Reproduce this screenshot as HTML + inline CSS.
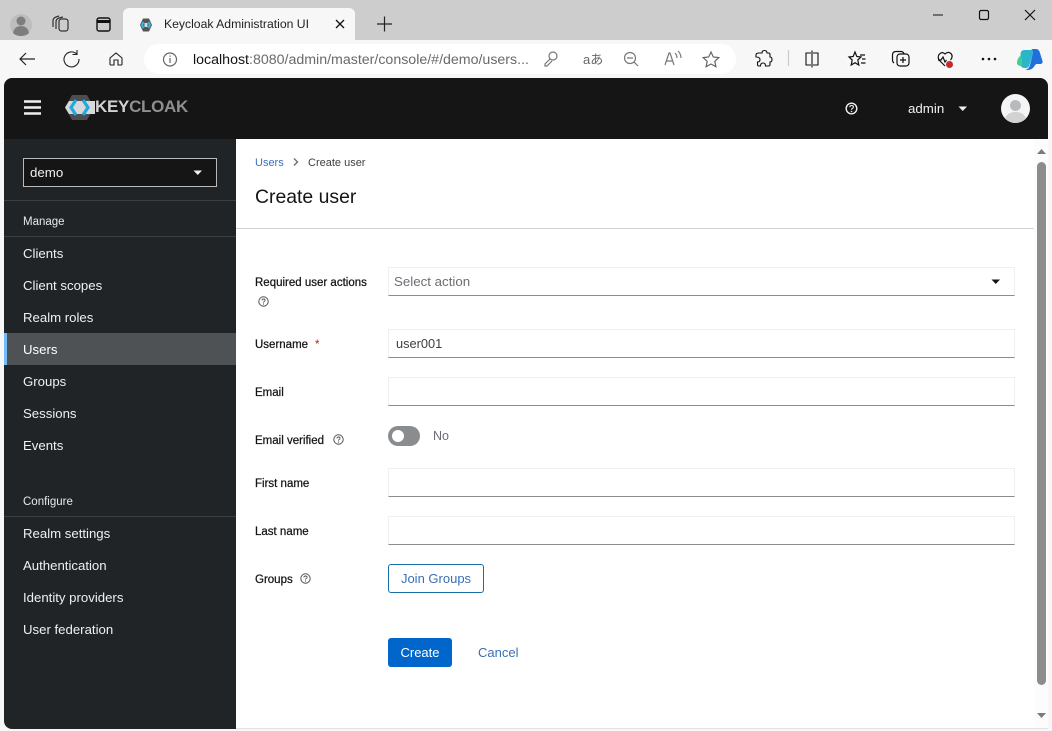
<!DOCTYPE html>
<html><head><meta charset="utf-8"><title>Keycloak Administration UI</title>
<style>
html,body{margin:0;padding:0;width:1052px;height:731px;overflow:hidden;background:#f7f7f7;font-family:"Liberation Sans",sans-serif}
.a{position:absolute;white-space:nowrap}
svg{position:absolute;overflow:visible}
.nav{position:absolute;left:23px;font-size:13.2px;color:#f0f0f0;white-space:nowrap;line-height:16px;margin-top:1px}
.lab{position:absolute;left:255px;font-size:11.5px;font-weight:400;color:#151515;white-space:nowrap;line-height:14px;-webkit-text-stroke:.25px #151515;margin-top:1px}
.inp{position:absolute;left:388px;width:627px;height:28px;box-sizing:border-box;background:#fff;border:1px solid #f0f0f0;border-bottom:1px solid #8a8d90;font-size:13.3px;color:#4f5255;line-height:26px;padding-left:5px}
.sep{position:absolute;left:4px;width:232px;height:1px;background:#3c3f42}
</style></head><body>
<div class="a" style="left:0;top:0;width:1052px;height:40px;background:#cdcdcd"></div>
<div class="a" style="left:0;top:40px;width:1052px;height:38px;background:#f7f7f7"></div>
<div class="a" style="left:123px;top:8px;width:232px;height:32px;background:#f7f7f7;border-radius:6px 6px 0 0"></div>
<div class="a" style="left:164px;top:16px;font-size:12.2px;color:#222;line-height:16px">Keycloak Administration UI</div>
<div class="a" style="left:144px;top:44px;width:592px;height:30px;background:#fff;border-radius:15px"></div>
<div class="a" style="left:193px;top:52px;font-size:14.2px;line-height:17px;color:#6a6a6a"><span style="color:#111">localhost</span>:8080/admin/master/console/#/demo/users...</div>

<svg style="left:0;top:0" width="1052" height="78" viewBox="0 0 1052 78" fill="none" stroke="#222" stroke-width="1.2">
 <circle cx="21" cy="25" r="11" fill="#bdbdbd" stroke="none"/>
 <circle cx="21" cy="21" r="4.5" fill="#7d7d7d" stroke="none"/>
 <path d="M13 33c1-5 4-7 8-7s7 2 8 7c-2 2-5 3-8 3s-6-1-8-3z" fill="#7d7d7d" stroke="none"/>
 <path d="M53 27v-6q0-3 3-4l3-1M56 29v-7q0-3 3-4l4-1" stroke="#333"/><rect x="59" y="19" width="9" height="12" rx="2.5" stroke="#333"/>
 <rect x="97" y="18" width="13" height="13" rx="2" stroke="#111" stroke-width="1.4"/><path d="M97 21.500h13" stroke="#111" stroke-width="3"/>
 <path d="M336 20l8 8M344 20l-8 8" stroke="#111" stroke-width="1.3"/>
 <path d="M377 24h15M384.500 16.500v15" stroke="#222" stroke-width="1.2"/>
 <path d="M35 59H20M26 53l-6 6 6 6" stroke-width="1.2"/>
 <path d="M76.500 53.800A7.500 7.500 0 1 0 79 59M77 50v4.500h-4.500" stroke-width="1.1"/>
 <path d="M110 58l6-5 6 5v6q0 1-1 1h-3v-5h-4v5h-3q-1 0-1-1z" stroke-width="1.1"/>
 <circle cx="170" cy="59.500" r="6.500" stroke="#666"/><path d="M170 58v5M170 55.500v1.200" stroke="#666"/>
 <circle cx="553" cy="56" r="4" stroke="#777"/><path d="M550 59l-5 5v2h2l5-5" stroke="#777"/>
 <text x="583" y="64" font-family="Liberation Sans,Noto Sans CJK JP,sans-serif" font-size="13" fill="#666" stroke="none">aあ</text>
 <circle cx="630" cy="58" r="5.500" stroke="#777"/><path d="M627 58h6M634 62l4 4" stroke="#777"/>
 <path d="M665 65l4-12h1l4 12M666.500 61h6M675 53q2 2 2 5M678 51q3 3 3 7" stroke="#777"/>
 <path d="M711 52l2.300 5 5.500.6-4 3.700 1.100 5.400-4.900-2.700-4.900 2.700 1.100-5.400-4-3.700 5.500-.6z" stroke="#666"/>
 <path d="M759 53h3q0-2.500 2.500-2.500t2.500 2.500h1.500q1.500 0 1.500 1.500v2.500q2 0 2 2.500t-2 2.500v2.500q0 1.500-1.500 1.500h-3q0-3-2.500-3t-2.500 3h-1.500q-1.500 0-1.500-1.500V62q2.500 0 2.500-2.500T756 57v-2q0-2 3-2z" stroke="#111" stroke-width="1.100"/>
 <path d="M788.500 50v16" stroke="#ccc"/>
 <path d="M812 50.500v17M811 53h-5v12h5M813 53h5v12h-5" stroke="#111" stroke-width="1.100"/>
 <path d="M855 52l1.800 4.500 4.200.5-3.200 3 1 5-3.800-2.300-3.800 2.300 1-5-3.200-3 4.200-.5zM860 55h5M862 59h3.500M861 63h4.500" stroke="#111"/>
 <path d="M894 63q-1.500-1-1.500-3v-5q0-3.500 3.500-3.500h5q2 0 3 2" stroke="#111"/><rect x="897" y="54" width="12" height="12" rx="3" stroke="#111"/><path d="M903 57v6M900 60h6" stroke="#111"/>
 <path d="M945 66l-5-5q-3-3-1-6.500 3-3.500 6-.5 3-3 6-.5 2.500 3-.500 6.500" stroke="#111"/><path d="M938 60h3l2-3 2 5 1.500-2" stroke="#111"/><circle cx="949.500" cy="64.500" r="3.500" fill="#c42b2b" stroke="none"/>
 <circle cx="983" cy="59" r="1.300" fill="#111" stroke="none"/><circle cx="989" cy="59" r="1.300" fill="#111" stroke="none"/><circle cx="995" cy="59" r="1.300" fill="#111" stroke="none"/>
 <path d="M1024 50h8q2 0 1.500 2l-4 13q-1 3-4 3h-2q-3-1-3-4v-9q0-5 3.500-5z" fill="#2bb5c9" stroke="none"/>
 <path d="M1031 49h5q3 0 4 4l2.500 8q.5 3-2.500 3h-4l-3 4q-2 2-6 2h-2q4-1 5-5l3-12q.5-3-2-4z" fill="#1f6fdc" stroke="none"/>
 <path d="M1020 56q-3 3-3 7 0 2 3 3l2-1v-7z" fill="#3fcf8e" stroke="none"/>
 <path d="M933 15h10" stroke="#111" stroke-width="1"/><rect x="979.500" y="10.500" width="9" height="9" rx="1.500" stroke="#111"/><path d="M1025 10l10 10M1035 10l-10 10" stroke="#111"/>
</svg>
<svg style="left:140px;top:18px" width="12" height="14" viewBox="0 0 12 14"><path d="M3 0.500h6l3 6.500-3 6.500H3L0 7z" fill="#555"/><path d="M3.500 4L2 7l1.500 3M8.500 4L10 7l-1.500 3" stroke="#3ab4e0" stroke-width="2" fill="none"/><rect x="4.500" y="5" width="3" height="4" fill="#bfe6f5"/></svg>

<!-- App -->
<div class="a" style="left:4px;top:78px;width:1044px;height:651px;background:#fff;border-radius:8px;overflow:hidden">
 <div class="a" style="left:0;top:0;width:1044px;height:61px;background:#151515"></div>
 <div class="a" style="left:0;top:61px;width:232px;height:590px;background:#212427"></div>
 <div class="a" style="left:0;top:255px;width:232px;height:32px;background:#4f5255"></div>
 <div class="a" style="left:0;top:255px;width:3px;height:32px;background:#73bcf7"></div>
</div>
<div class="a" style="left:236px;top:728px;width:812px;height:1px;background:#e4e4e4"></div>

<!-- Header -->
<svg style="left:24px;top:100px" width="18" height="15"><path d="M0 1.500h17M0 7.500h17M0 13.500h17" stroke="#f0f0f0" stroke-width="2.600"/></svg>
<svg style="left:64px;top:94px" width="34" height="27" viewBox="0 0 34 27">
 <path d="M8 1h15l7 12.500-7 12.500H8L1 13.500z" fill="#4d4d4d"/>
 <path d="M1 13.500L5 7h26v13H5z" fill="#d8d8d8"/>
 <path d="M12 6L7 13.500l5 7.500M19 6l5 7.500-5 7.500" stroke="#1fa9e0" stroke-width="3.200" fill="none"/>
</svg>
<div class="a" style="left:95px;top:97px;font-size:17px;font-weight:700;line-height:20px;letter-spacing:-.3px;color:#8f8f8f"><span style="color:#d2d2d2">KEY</span>CLOAK</div>
<svg style="left:845px;top:102px" width="13" height="13" viewBox="0 0 13 13"><circle cx="6.500" cy="6.500" r="5.300" stroke="#f0f0f0" stroke-width="1.400" fill="none"/><path d="M4.700 5.200q.2-1.700 1.900-1.700 1.800 0 1.800 1.500 0 1-1.100 1.500-.8.400-.8 1.300" stroke="#f0f0f0" stroke-width="1.100" fill="none"/><circle cx="6.500" cy="9.500" r=".8" fill="#f0f0f0"/></svg>
<div class="a" style="left:908px;top:100px;font-size:13.300px;line-height:17px;color:#f0f0f0">admin</div>
<svg style="left:958px;top:106px" width="10" height="6"><path d="M0.500 0.500h8.500L4.750 5z" fill="#f0f0f0"/></svg>
<svg style="left:1001px;top:94px" width="29" height="29" viewBox="0 0 29 29"><defs><clipPath id="av"><circle cx="14.500" cy="14.500" r="14.500"/></clipPath></defs><circle cx="14.500" cy="14.500" r="14.500" fill="#f5f5f5"/><g clip-path="url(#av)"><circle cx="14.500" cy="11.500" r="5.500" fill="#b8bbbe"/><path d="M3 29q1-11 11.500-11T26 29z" fill="#d2d2d2"/></g></svg>

<!-- Sidebar -->
<div class="a" style="left:23px;top:158px;width:194px;height:29px;box-sizing:border-box;border:1px solid #b8bbbe;background:#151515;color:#f0f0f0;font-size:13.300px;line-height:27px;padding-left:6px">demo</div>
<svg style="left:193px;top:170px" width="10" height="6"><path d="M0.500 0.500h8.500L4.750 5z" fill="#f0f0f0"/></svg>
<div class="sep" style="top:200px"></div>
<div class="a" style="left:23px;top:215px;font-size:11.500px;color:#e8e8e8;line-height:14px">Manage</div>
<div class="sep" style="top:236px"></div>
<div class="nav" style="top:245px">Clients</div>
<div class="nav" style="top:277px">Client scopes</div>
<div class="nav" style="top:309px">Realm roles</div>
<div class="nav" style="top:341px;color:#fff">Users</div>
<div class="nav" style="top:373px">Groups</div>
<div class="nav" style="top:405px">Sessions</div>
<div class="nav" style="top:437px">Events</div>
<div class="a" style="left:23px;top:495px;font-size:11.500px;color:#e8e8e8;line-height:14px">Configure</div>
<div class="sep" style="top:516px"></div>
<div class="nav" style="top:525px">Realm settings</div>
<div class="nav" style="top:557px">Authentication</div>
<div class="nav" style="top:589px">Identity providers</div>
<div class="nav" style="top:621px">User federation</div>

<!-- Main -->
<div class="a" style="left:255px;top:156px;font-size:11px;line-height:14px;color:#3b6fb6">Users</div>
<svg style="left:293px;top:158px" width="6" height="8"><path d="M1 .5L4.500 4 1 7.500" stroke="#6a6e73" stroke-width="1.400" fill="none"/></svg>
<div class="a" style="left:308px;top:156px;font-size:11px;line-height:14px;color:#3c3f42">Create user</div>
<div class="a" style="left:255px;top:186px;font-size:19.400px;line-height:23px;color:#151515">Create user</div>
<div class="a" style="left:236px;top:228px;width:798px;height:1px;background:#d2d2d2"></div>

<div class="lab" style="top:275px">Required user actions</div>
<svg style="left:258px;top:296px" width="11" height="11" viewBox="0 0 11 11"><use href="#q"/></svg>
<div class="inp" style="top:267px;height:29px;color:#6a6e73;line-height:27px">Select action</div>
<svg style="left:991px;top:279px" width="10" height="6"><path d="M0.500 0.500h8.500L4.750 5z" fill="#151515"/></svg>

<div class="lab" style="top:337px">Username</div>
<div class="a" style="left:315px;top:338px;font-size:11.500px;line-height:14px;color:#c9190b">*</div>
<div class="inp" style="top:329px;height:29px;color:#3c3f42;font-size:12.800px;padding-left:7px;line-height:27px">user001</div>

<div class="lab" style="top:385px">Email</div>
<div class="inp" style="top:377px;height:29px"></div>

<div class="lab" style="top:433px">Email verified</div>
<svg style="left:333px;top:434px" width="11" height="11" viewBox="0 0 11 11"><use href="#q"/></svg>
<div class="a" style="left:388px;top:426px;width:32px;height:20px;border-radius:10px;background:#8a8d90"></div>
<div class="a" style="left:392px;top:430px;width:12px;height:12px;border-radius:50%;background:#fff"></div>
<div class="a" style="left:433px;top:428px;font-size:12.500px;line-height:16px;color:#6a6e73">No</div>

<div class="lab" style="top:476px">First name</div>
<div class="inp" style="top:468px;height:29px"></div>

<div class="lab" style="top:524px">Last name</div>
<div class="inp" style="top:516px;height:29px"></div>

<div class="lab" style="top:572px">Groups</div>
<svg style="left:300px;top:573px" width="11" height="11" viewBox="0 0 11 11"><use href="#q"/></svg>
<div class="a" style="left:388px;top:564px;width:96px;height:29px;box-sizing:border-box;border:1px solid #1a6fa8;border-radius:3px;background:#fff;color:#3b6fb6;font-size:13px;line-height:27px;text-align:center">Join Groups</div>

<div class="a" style="left:388px;top:638px;width:64px;height:29px;border-radius:3px;background:#06c;color:#fff;font-size:13px;line-height:29px;text-align:center">Create</div>
<div class="a" style="left:478px;top:645px;font-size:13px;line-height:16px;color:#3b6fb6">Cancel</div>

<!-- Scrollbar -->
<div class="a" style="left:1034px;top:139px;width:14px;height:589px;background:#fcfcfc"></div>
<svg style="left:1037px;top:149px" width="9" height="5"><path d="M0 5L4.500 0 9 5z" fill="#7a7a7a"/></svg>
<div class="a" style="left:1037px;top:162px;width:9px;height:523px;border-radius:5px;background:#8c8c8c"></div>
<svg style="left:1037px;top:713px" width="9" height="5"><path d="M0 0L4.500 5 9 0z" fill="#7a7a7a"/></svg>

<svg width="0" height="0" style="left:0;top:0"><defs><g id="q"><circle cx="5.500" cy="5.500" r="4.700" stroke="#4f5255" stroke-width="1" fill="none"/><path d="M3.900 4.400q.1-1.400 1.600-1.400t1.600 1.300q0 .8-.9 1.200-.7.400-.7 1.100" stroke="#4f5255" stroke-width=".9" fill="none"/><circle cx="5.500" cy="8" r=".6" fill="#4f5255"/></g></defs></svg>
</body></html>
